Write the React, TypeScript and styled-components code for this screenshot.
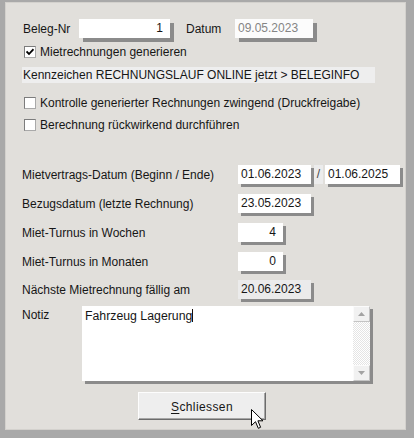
import React from "react";
import styled, { createGlobalStyle } from "styled-components";

const Global = createGlobalStyle`
  html, body { margin: 0; padding: 0; }
  body {
    font-family: "Liberation Sans", Arial, sans-serif;
    font-size: 12px;
    color: #161616;
  }
`;

const Frame = styled.div`
  width: 414px;
  height: 438px;
  box-sizing: border-box;
  background: #a9a9a9;
  padding: 2px 8px 8px 5px;
  display: flex;
`;

const Panel = styled.div`
  flex: 1;
  position: relative;
  box-sizing: border-box;
  background: #e1dfdb;
  border: 1px solid #d3d1cd;
  padding-left: 16px;
  display: flex;
  flex-direction: column;
`;

const Row = styled.div<{ $mt: number; $h?: number }>`
  display: flex;
  align-items: center;
  margin-top: ${(p) => p.$mt}px;
  height: ${(p) => (p.$h ? `${p.$h}px` : "auto")};
`;

const Label = styled.span<{ $w: number; $ml?: number; $pl?: number }>`
  width: ${(p) => p.$w}px;
  margin-left: ${(p) => p.$ml ?? 0}px;
  padding-left: ${(p) => p.$pl ?? 0}px;
  box-sizing: border-box;
  flex: none;
  white-space: nowrap;
`;

const Field = styled.div<{
  $w: number;
  $align?: "left" | "right";
  $shadow?: number;
  $bg?: string;
  $color?: string;
  $ml?: number;
}>`
  flex: none;
  width: ${(p) => p.$w}px;
  height: 19px;
  line-height: 19px;
  box-sizing: border-box;
  margin-left: ${(p) => p.$ml ?? 0}px;
  background: ${(p) => p.$bg ?? "#ffffff"};
  color: ${(p) => p.$color ?? "#161616"};
  text-align: ${(p) => p.$align ?? "left"};
  padding: ${(p) => (p.$align === "right" ? "0 7px 0 0" : "0 0 0 3px")};
  box-shadow: ${(p) => p.$shadow ?? 3}px ${(p) => p.$shadow ?? 3}px 0 #8b8b8b;
  white-space: nowrap;
`;

const Slash = styled.span`
  flex: none;
  width: 9px;
  height: 19px;
  line-height: 19px;
  margin-left: 3px;
  background: #ececec;
  text-align: center;
  color: #444;
`;

const CheckRow = styled.label`
  display: flex;
  align-items: center;
  height: 12px;
  padding-left: 2px;
  white-space: nowrap;
`;

const Box = styled.span`
  flex: none;
  width: 12px;
  height: 12px;
  box-sizing: border-box;
  background: #fff;
  border: 1px solid #7c7c7c;
  border-right-color: #a9a9a9;
  border-bottom-color: #a9a9a9;
  margin-right: 4px;
  display: flex;
  align-items: center;
  justify-content: center;
`;

const Strip = styled.div`
  width: 353px;
  height: 16px;
  line-height: 16px;
  background: #eeeeee;
  padding-left: 1px;
  box-sizing: border-box;
  white-space: nowrap;
`;

const NoteRow = styled.div`
  display: flex;
  align-items: flex-start;
  margin-top: 7px;
`;

const NoteLabel = styled.span`
  width: 60px;
  flex: none;
  padding-top: 2px;
`;

const NoteBox = styled.div`
  width: 288px;
  height: 75px;
  display: flex;
  background: #fff;
  box-shadow: 3px 3px 0 #8b8b8b;
`;

const NoteText = styled.div`
  flex: 1;
  padding: 3px 0 0 3px;
  font-size: 12.3px;
  white-space: nowrap;
`;

const Caret = styled.span`
  display: inline-block;
  width: 1px;
  height: 13px;
  background: #1a0f0a;
  vertical-align: -2px;
`;

const ScrollBar = styled.div`
  width: 17px;
  display: flex;
  flex-direction: column;
`;

const ScrollBtn = styled.div`
  height: 16px;
  box-sizing: border-box;
  background: #f1f1f1;
  border: 1px solid;
  border-color: #fbfbfb #c4c4c4 #c4c4c4 #fbfbfb;
  display: flex;
  align-items: center;
  justify-content: center;
`;

const Track = styled.div`
  flex: 1;
  background: repeating-conic-gradient(#e4e4e4 0 25%, #ffffff 0 50%) 0 0 / 2px 2px;
`;

const ButtonRow = styled.div`
  margin-top: 11px;
  padding-left: 116px;
  display: flex;
`;

const Button = styled.button`
  width: 128px;
  height: 28px;
  box-sizing: border-box;
  background: #eeeeee;
  border: 1px solid;
  border-color: #fdfdfd #6c6c6c #6c6c6c #fdfdfd;
  box-shadow: inset -1px -1px 0 #a6a6a6;
  font-family: "Liberation Sans", Arial, sans-serif;
  font-size: 12px;
  letter-spacing: 0.4px;
  color: #161616;
  padding: 2px 0 0 0;
  u { text-decoration: underline; text-underline-offset: 2px; }
`;

const Pointer = styled.svg`
  position: absolute;
  left: 245px;
  top: 406px;
`;

const Check = () => (
  <svg width="8" height="8" viewBox="0 0 8 8">
    <path d="M0.5 3.5 L3 6 L7.5 1.2" stroke="#000" strokeWidth="1.8" fill="none" />
  </svg>
);

const Arrow = ({ up }: { up?: boolean }) => (
  <svg width="7" height="4" viewBox="0 0 7 4">
    <path d={up ? "M0 4 L3.5 0 L7 4 Z" : "M0 0 L3.5 4 L7 0 Z"} fill="#a3a3a3" />
  </svg>
);

export default function App() {
  return (
    <>
      <Global />
      <Frame>
        <Panel>
          <Row $mt={16} $h={19}>
            <Label $w={57} $pl={1}>Beleg-Nr</Label>
            <Field $w={91} $align="right" $shadow={4}>1</Field>
            <Label $w={49} $ml={16}>Datum</Label>
            <Field $w={78} $shadow={4} $bg="#fcfcfc" $color="#858585">09.05.2023</Field>
          </Row>

          <Row $mt={8}>
            <CheckRow>
              <Box><Check /></Box>
              Mietrechnungen generieren
            </CheckRow>
          </Row>

          <Row $mt={9}>
            <Strip>Kennzeichen RECHNUNGSLAUF ONLINE jetzt &gt; BELEGINFO</Strip>
          </Row>

          <Row $mt={14}>
            <CheckRow>
              <Box />
              Kontrolle generierter Rechnungen zwingend (Druckfreigabe)
            </CheckRow>
          </Row>

          <Row $mt={10}>
            <CheckRow>
              <Box />
              Berechnung rückwirkend durchführen
            </CheckRow>
          </Row>

          <Row $mt={34} $h={19}>
            <Label $w={216}>Mietvertrags-Datum (Beginn / Ende)</Label>
            <Field $w={73}>01.06.2023</Field>
            <Slash>/</Slash>
            <Field $w={75} $ml={2}>01.06.2025</Field>
          </Row>

          <Row $mt={10} $h={19}>
            <Label $w={216}>Bezugsdatum (letzte Rechnung)</Label>
            <Field $w={73}>23.05.2023</Field>
          </Row>

          <Row $mt={10} $h={19}>
            <Label $w={216}>Miet-Turnus in Wochen</Label>
            <Field $w={45} $align="right">4</Field>
          </Row>

          <Row $mt={10} $h={19}>
            <Label $w={216}>Miet-Turnus in Monaten</Label>
            <Field $w={45} $align="right">0</Field>
          </Row>

          <Row $mt={9} $h={19}>
            <Label $w={216}>Nächste Mietrechnung fällig am</Label>
            <Field $w={73} $bg="#ebebeb">20.06.2023</Field>
          </Row>

          <NoteRow>
            <NoteLabel>Notiz</NoteLabel>
            <NoteBox>
              <NoteText>
                Fahrzeug Lagerung<Caret />
              </NoteText>
              <ScrollBar>
                <ScrollBtn><Arrow up /></ScrollBtn>
                <Track />
                <ScrollBtn><Arrow /></ScrollBtn>
              </ScrollBar>
            </NoteBox>
          </NoteRow>

          <ButtonRow>
            <Button>
              <u>S</u>chliessen
            </Button>
          </ButtonRow>

          <Pointer width="13" height="21" viewBox="0 0 13 21">
            <path
              d="M0.5 0.5 L0.5 16.5 L4.5 12.7 L7.3 19.3 L9.6 18.3 L6.9 11.8 L12 11.8 Z"
              fill="#ffffff"
              stroke="#000000"
              strokeWidth="1"
              strokeLinejoin="miter"
            />
          </Pointer>
        </Panel>
      </Frame>
    </>
  );
}
